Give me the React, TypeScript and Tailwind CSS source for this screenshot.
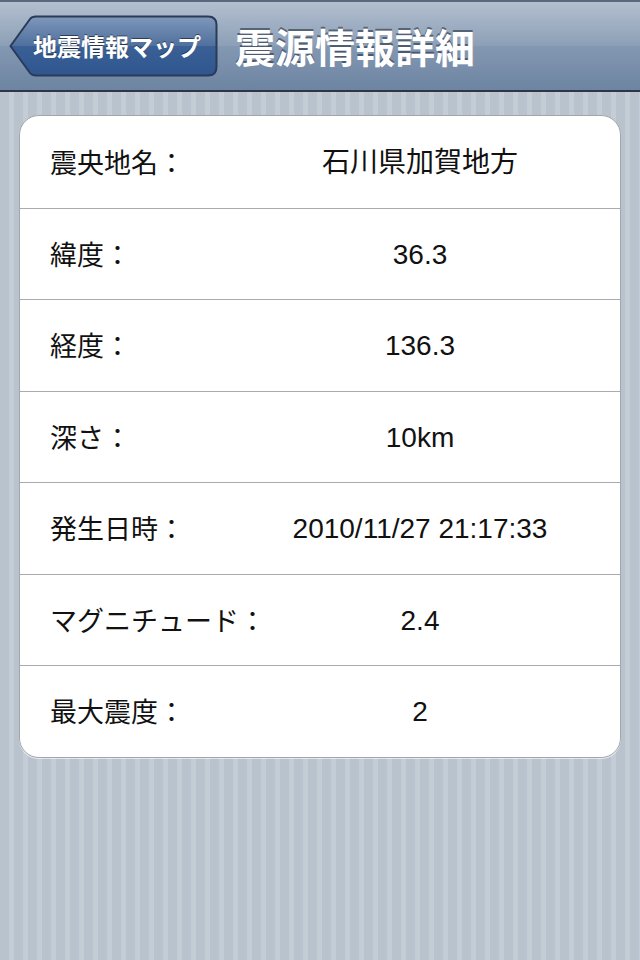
import React from 'react';

const rows = [
  { label: '震央地名：', value: '石川県加賀地方' },
  { label: '緯度：', value: '36.3' },
  { label: '経度：', value: '136.3' },
  { label: '深さ：', value: '10km' },
  { label: '発生日時：', value: '2010/11/27 21:17:33' },
  { label: 'マグニチュード：', value: '2.4' },
  { label: '最大震度：', value: '2' },
];

function BackButton() {
  return (
    <button className="relative w-[210px] h-[62px] shrink-0">
      <svg className="absolute inset-0" width="210" height="62" viewBox="0 0 210 62">
        <defs>
          <linearGradient id="bb" x1="0" y1="0" x2="0" y2="1">
            <stop offset="0" stopColor="#7f98bb" />
            <stop offset="0.5" stopColor="#4f6f9d" />
            <stop offset="0.5" stopColor="#3a6095" />
            <stop offset="1" stopColor="#2f5690" />
          </linearGradient>
        </defs>
        <path
          d="M1.5 31 L21 4 Q23 1.5 27 1.5 L199 1.5 Q207.5 1.5 207.5 10 L207.5 52 Q207.5 60.5 199 60.5 L27 60.5 Q23 60.5 21 58 Z"
          fill="url(#bb)"
          stroke="#2a3a57"
          strokeWidth="2"
        />
      </svg>
      <span className="relative flex h-full items-center pl-[24px] text-[24px] font-bold text-white [font-family:'Noto_Sans_CJK_JP',sans-serif] [text-shadow:0_-1px_0_rgba(0,0,0,0.5)]">
        地震情報マップ
      </span>
    </button>
  );
}

export default function App() {
  return (
    <div className="min-h-[960px] w-[640px] bg-[repeating-linear-gradient(90deg,#b9c3cd_0px,#b9c3cd_9px,#c4cdd6_9px,#c4cdd6_14px)] [font-family:'Liberation_Sans','Noto_Sans_CJK_JP',sans-serif]">
      <div className="flex h-[92px] items-center border-t-2 border-b-2 border-t-[#5a687d] border-b-[#2d3642] bg-[linear-gradient(#b3bfd0,#8c9fb6_50%,#8398b2_50%,#6d84a2)] pl-[9px]">
        <BackButton />
        <h1 className="ml-[16px] text-[40px] font-bold leading-none text-white [font-family:'Noto_Sans_CJK_JP',sans-serif] [text-shadow:0_-2px_0_rgba(40,50,70,0.6)]">
          震源情報詳細
        </h1>
      </div>

      <div className="mx-[19px] mt-[23px] overflow-hidden rounded-[20px] border border-[#a2a6aa] bg-white shadow-[0_1px_0_rgba(255,255,255,0.6)]">
        {rows.map((r, i) => (
          <div
            key={i}
            className={`flex h-[91.5px] items-center ${i > 0 ? 'border-t border-[#a9abae]' : ''}`}
          >
            <div className="w-[200px] shrink-0 whitespace-nowrap pl-[30px] text-[27px] text-[#111] [font-family:'Noto_Sans_CJK_JP',sans-serif]">
              {r.label}
            </div>
            <div className="flex-1 pt-[2px] text-center text-[28px] text-[#111]">{r.value}</div>
          </div>
        ))}
      </div>
    </div>
  );
}
